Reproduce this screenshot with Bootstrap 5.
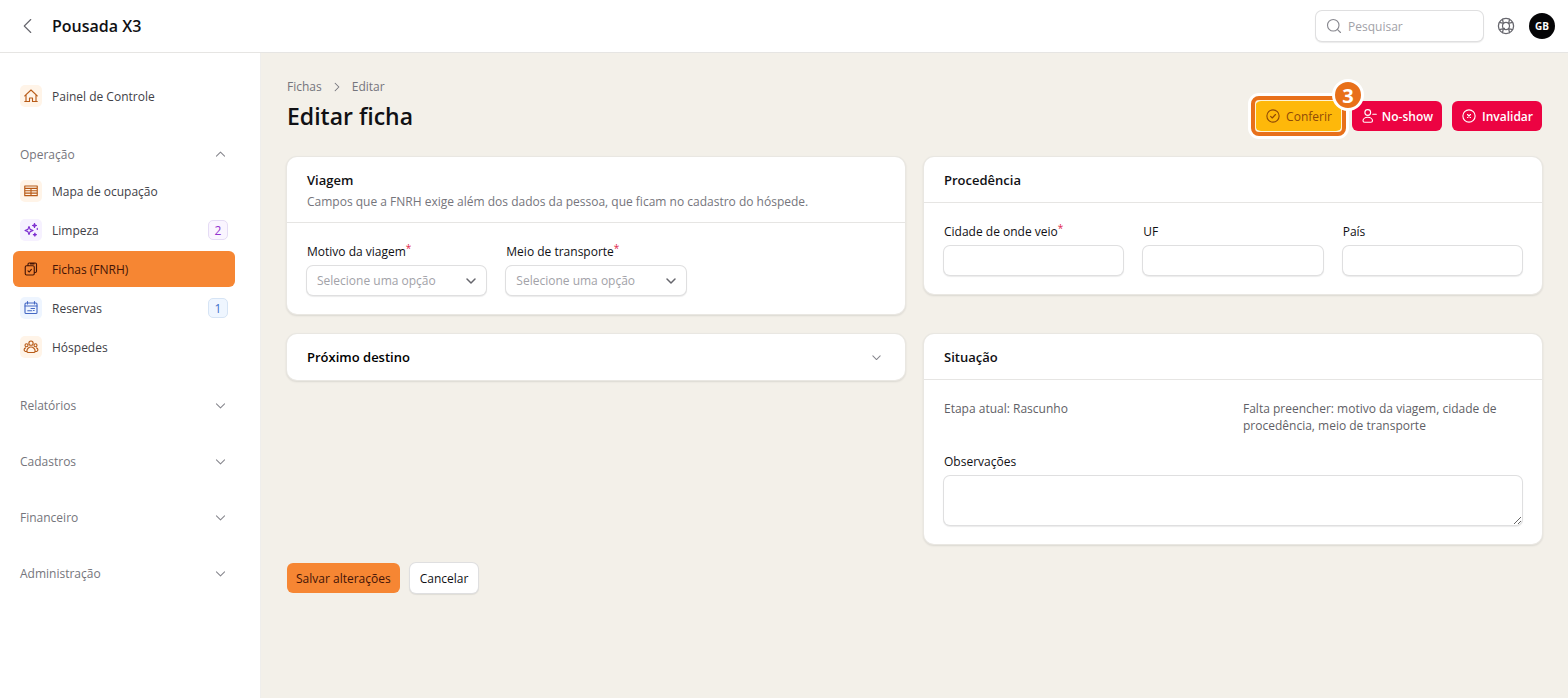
<!DOCTYPE html>
<html lang="pt-BR">
<head>
<meta charset="utf-8">
<meta name="viewport" content="width=device-width, initial-scale=1">
<title>Editar ficha - Pousada X3</title>
<link href="https://cdn.jsdelivr.net/npm/bootstrap@5.3.0/dist/css/bootstrap.min.css" rel="stylesheet">
<style>
  :root { --edge: #e6e5e3; --ink: #101014; --muted-ink: #75757c; --brand: #f68633; --danger: #ec0342; }
  body { font-family: "Open Sans", "Liberation Sans", sans-serif; font-size: 12px; line-height: 17px; color: var(--ink); background: #f3f0e9; }
  svg.ico { width: 16px; height: 16px; fill: none; stroke: currentColor; stroke-width: 18; stroke-linecap: round; stroke-linejoin: round; flex: none; }
  svg.ico-lg { width: 18px; height: 18px; }
  .topbar { height: 53px; border-bottom: 1px solid var(--edge); padding: 0 13px 0 20px; }
  .brand-name { font-size: 16px; font-weight: 600; line-height: 24px; }
  .ring { border: 0; border-radius: 6px; box-shadow: 0 0 0 1px #dfdfe0, 0 1px 1px 1px #00000014; background-color: #fff; }
  .search-box { width: 167px; height: 30px; padding: 0 10px; gap: 6px; color: #88888f; }
  .search-box input { border: 0; outline: 0; min-width: 0; padding: 0; font-size: 12px; background: none; }
  input::placeholder { color: #a2a2a8; }
  .avatar { width: 26px; height: 26px; border-radius: 50%; background: #050507; color: #fff; font-size: 10px; font-weight: 700; }
  .icon-btn { border: 0; background: none; padding: 0; color: #66666d; }
  .help { margin: 0 14px; }
  .side { width: 261px; background: #fff; border-right: 1px solid #efeeec; padding: 25px 25px 25px 13px; gap: 24px; }
  .side-list { gap: 3px; }
  .side-item { height: 36px; padding: 0 7px; gap: 10px; border-radius: 6px; color: #414147; text-decoration: none; }
  .side-item.current { background: var(--brand); color: #431407; font-weight: 500; }
  .side-head { height: 32px; padding: 0 8px 0 7px; border: 0; background: none; color: #75757c; width: 100%; }
  .side-head .ico, .fold .ico { width: 13px; height: 13px; stroke-width: 20; color: #85858c; }
  .tile { width: 22px; height: 22px; border-radius: 5px; }
  .t-orange { background: #fff4e8; color: #b85a16; }
  .t-violet { background: #f6f1ff; color: #7c2bd0; }
  .t-blue { background: #eef5ff; color: #4468c4; }
  .count { width: 20px; height: 20px; border-radius: 5px; font-weight: 500; border: 1px solid; }
  .c-violet { background: #faf5ff; color: #9333cf; border-color: #e5dcf5; }
  .c-blue { background: #eff6ff; color: #3b6fc9; border-color: #d6e4f5; }
  .content { padding: 25px 26px; min-width: 0; }
  .crumbs { gap: 9px; line-height: 18px; color: var(--muted-ink); }
  .crumbs a { color: inherit; text-decoration: none; }
  .crumbs .ico { width: 12px; height: 12px; stroke-width: 22; }
  h1 { font-size: 23px; font-weight: 600; line-height: 32px; margin: 4px 0 0; }
  h2 { font-size: 13px; font-weight: 600; line-height: 20px; margin: 0; }
  .acts { gap: 10px; margin-bottom: 1px; }
  .act { height: 30px; padding: 0 10px; border-radius: 6px; border: 0; font-size: 12px; font-weight: 600; gap: 5px; white-space: nowrap; }
  .act-danger { background: var(--danger); color: #fff; padding: 0 9px; }
  .act-warn { background: #feb80a; color: #8f4a08; font-weight: 500; }
  .act-main { background: var(--brand); color: #431407; font-weight: 500; padding: 0 9px; }
  .act-plain { font-weight: 500; color: var(--ink); }
  .focus-frame { inset: -5px -4px; border: 4px solid #e8701a; border-radius: 8px; box-shadow: 0 0 0 3px #fff, inset 0 0 0 1px #fff3d0; pointer-events: none; }
  .step { width: 32px; height: 32px; top: -22px; right: -22px; border: 3px solid #fff; border-radius: 50%; background: #e8701a; color: #fff; font-size: 20px; font-weight: 700; z-index: 2; }
  .cards { display: grid; grid-template-columns: repeat(2, minmax(0, 1fr)); gap: 20px 19px; align-items: start; margin-top: 25px; }
  .panel { background: #fff; border-radius: 10px; box-shadow: 0 0 0 1px #e9e7e2, 0 1px 2px 1px #0000001a; }
  .panel-top { padding: 13px 20px 12px; border-bottom: 1px solid var(--edge); }
  .panel-top p { margin: 4px 0 0; line-height: 16px; color: var(--muted-ink); }
  .panel-in { padding: 20px 20px 19px; }
  .trio { display: grid; grid-template-columns: repeat(3, minmax(0, 1fr)); gap: 20px; }
  .duo { display: grid; grid-template-columns: repeat(2, minmax(0, 1fr)); gap: 20px; color: #5f5f66; margin-bottom: 19px; }
  .fold { border: 0; background: none; width: 100%; padding: 13px 22px 13px 20px; }
  .field-name { display: block; font-weight: 500; margin-bottom: 6px; white-space: nowrap; }
  .field-name sup { color: #e11d48; font-size: 10px; line-height: 0; top: -4px; }
  .field { display: block; width: 100%; height: 29px; padding: 0 10px; font-size: 12px; }
  select.field { appearance: none; color: #a2a2a8; padding-right: 28px; background: #fff url("data:image/svg+xml,%3Csvg xmlns='http://www.w3.org/2000/svg' viewBox='0 0 12 12' fill='none' stroke='%2366666d' stroke-width='1.5' stroke-linecap='round' stroke-linejoin='round'%3E%3Cpath d='M2 4l4 4 4-4'/%3E%3C/svg%3E") no-repeat right 9px center / 12px; }
  textarea.field { height: 49px; resize: vertical; }
  .form-end { gap: 10px; margin-top: 19px; }
</style>
</head>
<body class="d-flex flex-column min-vh-100">
<header class="topbar d-flex align-items-center bg-white">
  <button class="icon-btn d-flex me-3" aria-label="Voltar"><svg class="ico" viewBox="0 0 256 256"><path d="M172 24L68 128l104 104"/></svg></button>
  <span class="brand-name">Pousada X3</span>
  <label class="search-box ring d-flex align-items-center ms-auto">
    <svg class="ico" viewBox="0 0 256 256"><circle cx="116" cy="116" r="92"/><path d="M181 181l51 51"/></svg>
    <input type="search" placeholder="Pesquisar" aria-label="Pesquisar">
  </label>
  <button class="icon-btn help d-flex" aria-label="Ajuda"><svg class="ico ico-lg" viewBox="0 0 256 256"><circle cx="128" cy="128" r="108"/><circle cx="128" cy="128" r="50"/><path d="M92 94L78 34M94 92L34 78M164 94l14-60M162 92l60-14M92 162l14 0M92 162l-14 60M94 164l-60 14M164 162l14 60M162 164l60 14"/></svg></button>
  <span class="avatar d-flex align-items-center justify-content-center">GB</span>
</header>
<div class="d-flex flex-grow-1">
  <nav class="side d-flex flex-column flex-shrink-0" aria-label="Principal">
    <a href="#" class="side-item d-flex align-items-center"><span class="tile t-orange d-flex align-items-center justify-content-center"><svg class="ico" viewBox="0 0 256 256"><path d="M28 126L128 32l100 94M48 110v104M208 110v104M28 216h76v-56h48v56h76"/></svg></span>Painel de Controle</a>
    <div class="side-list d-flex flex-column">
      <button class="side-head d-flex align-items-center justify-content-between" aria-expanded="true">Operação <svg class="ico" viewBox="0 0 256 256"><path d="M48 160l80-80 80 80"/></svg></button>
      <a href="#" class="side-item d-flex align-items-center"><span class="tile t-orange d-flex align-items-center justify-content-center"><svg class="ico" viewBox="0 0 256 256"><path d="M28 48h200v154H28zM28 86h200M28 124h200M28 162h200M128 86v116"/></svg></span>Mapa de ocupação</a>
      <a href="#" class="side-item d-flex align-items-center"><span class="tile t-violet d-flex align-items-center justify-content-center"><svg class="ico" viewBox="0 0 256 256"><path d="M96 72l18 46 46 18-46 18-18 46-18-46-46-18 46-18zM184 24l8 24 24 8-24 8-8 24-8-24-24-8 24-8zM190 178l6 18 18 6-18 6-6 18-6-18-18-6 18-6zM228 100v20"/></svg></span>Limpeza <span class="count c-violet ms-auto d-flex align-items-center justify-content-center">2</span></a>
      <a href="#" class="side-item current d-flex align-items-center" aria-current="page"><span class="tile d-flex align-items-center justify-content-center"><svg class="ico" viewBox="0 0 256 256"><path d="M80 72V52a20 20 0 0 1 20-20h96a20 20 0 0 1 20 20v112a20 20 0 0 1-20 20h-16M56 76h104a20 20 0 0 1 20 20v108a20 20 0 0 1-20 20H56a20 20 0 0 1-20-20V96a20 20 0 0 1 20-20zM80 158l20 18 34-42M120 32v16h56V32"/></svg></span>Fichas (FNRH)</a>
      <a href="#" class="side-item d-flex align-items-center"><span class="tile t-blue d-flex align-items-center justify-content-center"><svg class="ico" viewBox="0 0 256 256"><rect x="32" y="48" width="192" height="168" rx="18"/><path d="M32 96h192M72 24v40M184 24v40M128 136h56M76 172h64M168 168h10"/></svg></span>Reservas <span class="count c-blue ms-auto d-flex align-items-center justify-content-center">1</span></a>
      <a href="#" class="side-item d-flex align-items-center"><span class="tile t-orange d-flex align-items-center justify-content-center"><svg class="ico" viewBox="0 0 256 256"><circle cx="128" cy="66" r="34"/><circle cx="56" cy="100" r="24"/><circle cx="200" cy="100" r="24"/><path d="M128 128c-36 0-66 32-66 62 0 18 10 26 24 26h84c14 0 24-8 24-26 0-30-30-62-66-62zM62 200c-30 2-44-10-44-28 0-12 8-24 22-30M194 200c30 2 44-10 44-28 0-12-8-24-22-30"/></svg></span>Hóspedes</a>
    </div>
    <button class="side-head d-flex align-items-center justify-content-between">Relatórios <svg class="ico" viewBox="0 0 256 256"><path d="M48 96l80 80 80-80"/></svg></button>
    <button class="side-head d-flex align-items-center justify-content-between">Cadastros <svg class="ico" viewBox="0 0 256 256"><path d="M48 96l80 80 80-80"/></svg></button>
    <button class="side-head d-flex align-items-center justify-content-between">Financeiro <svg class="ico" viewBox="0 0 256 256"><path d="M48 96l80 80 80-80"/></svg></button>
    <button class="side-head d-flex align-items-center justify-content-between">Administração <svg class="ico" viewBox="0 0 256 256"><path d="M48 96l80 80 80-80"/></svg></button>
  </nav>
  <main class="content flex-grow-1">
    <div class="d-flex justify-content-between align-items-end">
      <div>
        <nav class="crumbs d-flex align-items-center" aria-label="Trilha"><a href="#">Fichas</a><svg class="ico" viewBox="0 0 256 256"><path d="M88 48l80 80-80 80"/></svg><a href="#">Editar</a></nav>
        <h1>Editar ficha</h1>
      </div>
      <div class="acts d-flex">
        <div class="position-relative">
          <button class="act act-warn d-flex align-items-center"><svg class="ico" viewBox="0 0 256 256"><circle cx="128" cy="128" r="98"/><path d="M90 134l26 26 52-56"/></svg>Conferir</button>
          <span class="focus-frame position-absolute"></span>
          <span class="step position-absolute d-flex align-items-center justify-content-center">3</span>
        </div>
        <button class="act act-danger d-flex align-items-center"><svg class="ico" viewBox="0 0 256 256"><circle cx="108" cy="72" r="46"/><path d="M108 148c-46 0-76 28-76 56 0 16 10 24 26 24h100c16 0 26-8 26-24 0-28-30-56-76-56zM188 100h56"/></svg>No-show</button>
        <button class="act act-danger d-flex align-items-center"><svg class="ico" viewBox="0 0 256 256"><circle cx="128" cy="128" r="98"/><path d="M104 104l48 48M152 104l-48 48"/></svg>Invalidar</button>
      </div>
    </div>
    <form>
      <div class="cards">
        <section class="panel">
          <div class="panel-top"><h2>Viagem</h2><p>Campos que a FNRH exige além dos dados da pessoa, que ficam no cadastro do hóspede.</p></div>
          <div class="panel-in trio">
            <div><label class="field-name" for="motivo">Motivo da viagem<sup>*</sup></label><select class="field ring" id="motivo"><option>Selecione uma opção</option></select></div>
            <div><label class="field-name" for="meio">Meio de transporte<sup>*</sup></label><select class="field ring" id="meio"><option>Selecione uma opção</option></select></div>
          </div>
        </section>
        <section class="panel">
          <div class="panel-top"><h2>Procedência</h2></div>
          <div class="panel-in trio">
            <div><label class="field-name" for="cidade">Cidade de onde veio<sup>*</sup></label><input class="field ring" id="cidade"></div>
            <div><label class="field-name" for="uf">UF</label><input class="field ring" id="uf"></div>
            <div><label class="field-name" for="pais">País</label><input class="field ring" id="pais"></div>
          </div>
        </section>
        <section class="panel">
          <button type="button" class="fold d-flex align-items-center justify-content-between" aria-expanded="false"><h2>Próximo destino</h2><svg class="ico" viewBox="0 0 256 256"><path d="M56 96l72 72 72-72"/></svg></button>
        </section>
        <section class="panel">
          <div class="panel-top"><h2>Situação</h2></div>
          <div class="panel-in">
            <div class="duo"><span>Etapa atual: Rascunho</span><span>Falta preencher: motivo da viagem, cidade de procedência, meio de transporte</span></div>
            <label class="field-name" for="obs">Observações</label>
            <textarea class="field ring" id="obs"></textarea>
          </div>
        </section>
      </div>
      <div class="form-end d-flex">
        <button class="act act-main">Salvar alterações</button>
        <button type="button" class="act act-plain ring">Cancelar</button>
      </div>
    </form>
  </main>
</div>
<script src="https://cdn.jsdelivr.net/npm/bootstrap@5.3.0/dist/js/bootstrap.bundle.min.js"></script>
</body>
</html>
